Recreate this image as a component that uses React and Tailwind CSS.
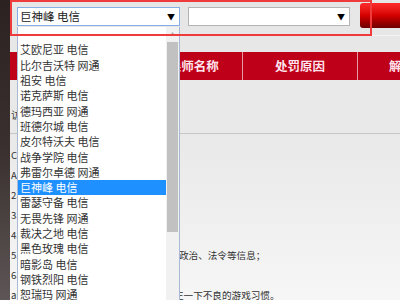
import React from "react"

const SERVERS = [
  "艾欧尼亚 电信",
  "比尔吉沃特 网通",
  "祖安 电信",
  "诺克萨斯 电信",
  "德玛西亚 网通",
  "班德尔城 电信",
  "皮尔特沃夫 电信",
  "战争学院 电信",
  "弗雷尔卓德 网通",
  "巨神峰 电信",
  "雷瑟守备 电信",
  "无畏先锋 网通",
  "裁决之地 电信",
  "黑色玫瑰 电信",
  "暗影岛 电信",
  "钢铁烈阳 电信",
  "恕瑞玛 网通",
  "扭曲丛林 网通",
]

const SELECTED = "巨神峰 电信"

const LINES = [
  { lead: "C", hidden: "查询说明：", text: "" },
  { lead: "A", hidden: "处罚类型：", text: "" },
  { lead: "2", hidden: "、禁止使用外挂等第三方软件；", text: "" },
  { lead: "3", hidden: "、禁止恶意挂机、消极比赛；", text: "" },
  { lead: "4", hidden: "、禁止言语辱骂其他玩家；", text: "" },
  { lead: "5", hidden: "、禁止发布色情、赌博、涉及", text: "政治、法令等信息；" },
  { lead: "6", hidden: "、禁止利用游戏漏洞获利；", text: "" },
  { lead: "a", hidden: "ll：希望各位召唤师认真纠", text: "正一下不良的游戏习惯。", narrow: true },
]

function Select({ value, focused, className = "" }) {
  return (
    <div
      className={`flex h-[19px] shrink-0 items-center justify-between bg-white pl-[2px] pr-[4px] text-[11.5px] leading-none text-[#222] border ${
        focused ? "border-[#86aee6]" : "border-[#b4b4b4]"
      } ${className}`}
    >
      <span>{value}</span>
      <span className="text-[8px] text-black">▼</span>
    </div>
  )
}

function Dropdown() {
  return (
    <div className="absolute left-[17px] top-[27px] z-10 flex h-[290px] w-[163px] border-x border-[#a9b8d4] bg-white">
      <ul className="flex-1 text-[11px] leading-none text-[#333]">
        <li className="h-[15.3px]" />
        {SERVERS.map((s) => (
          <li
            key={s}
            className={`flex h-[15.3px] items-center pl-[2px] ${
              s === SELECTED ? "bg-[#1e90ff] text-white" : ""
            }`}
          >
            {s}
          </li>
        ))}
      </ul>
      <div className="relative w-[13px] bg-[#f1f1f1]">
        <div className="flex h-[13px] items-center justify-center text-[5px] text-[#a0a0a0]">▲</div>
        <div className="absolute left-[1px] right-[1px] top-[15px] h-[190px] bg-[#c1c1c1]" />
      </div>
    </div>
  )
}

export default function App() {
  return (
    <div
      className="relative flex h-[300px] w-[400px] overflow-hidden bg-[#e8e8e8]"
      style={{ fontFamily: '"Noto Sans CJK SC", "Noto Sans", sans-serif' }}
    >
      {/* left dark edge */}
      <div className="w-[10px] shrink-0 bg-gradient-to-b from-[#2c2222] via-[#3a3030] to-[#5e5656]" />

      <div className="flex min-w-0 flex-1 flex-col overflow-hidden bg-gradient-to-b from-[#e6e6e6] via-[#eaeaea] to-[#f6f6f6]">
        {/* query bar */}
        <div className="flex h-[36px] shrink-0 items-start border-b border-[#f4f4f4] pl-[7px] pt-[7px]">
          <Select value={SELECTED} focused className="w-[163px]" />
          <Select value="" className="ml-[8px] w-[162px]" />
          <button className="-mt-[4px] ml-[10px] h-[25px] w-[60px] shrink-0 rounded-l-[3px] bg-gradient-to-b from-[#ff2a2a] via-[#d40000] to-[#6e0000]" />
        </div>

        {/* table header */}
        <div className="mt-[16px] flex h-[28px] shrink-0 items-center bg-[#bf0019] text-[12.5px] font-bold text-[#ffe4ee]">
          <div className="flex h-full w-[123px] shrink-0 items-center justify-center border-r border-[#e59aa6]">序号</div>
          <div className="flex h-full w-[110px] shrink-0 items-center justify-center border-r border-[#e59aa6]">召唤师名称</div>
          <div className="flex h-full w-[115px] shrink-0 items-center justify-center border-r border-[#e59aa6]">处罚原因</div>
          <div className="flex h-full w-[112px] shrink-0 items-center justify-center whitespace-nowrap">解封时间</div>
        </div>

        {/* empty result row */}
        <div className="flex h-[54px] shrink-0 items-start border-b border-[#c6c6c6] bg-[#e9e9e9] pl-[1px] pt-[27px] text-[10px] text-[#444]">
          访问记录为空
        </div>

        {/* notes */}
        <div className="mt-[11px] flex flex-col pl-[1px] text-[9.6px] text-[#333]">
          {LINES.map((l, i) => (
            <div key={i} className="flex h-[20px] items-center whitespace-nowrap">
              <span className={`inline-block overflow-hidden ${l.narrow ? "w-[163px]" : "w-[168px]"}`}>
                {l.lead}
                {l.hidden}
              </span>
              <span>{l.text}</span>
            </div>
          ))}
        </div>
      </div>

      <Dropdown />

      {/* annotation frame */}
      <div className="pointer-events-none absolute left-[10px] top-0 z-20 h-[36px] w-[362px] border-2 border-[#ef3b3b]" />
    </div>
  )
}
